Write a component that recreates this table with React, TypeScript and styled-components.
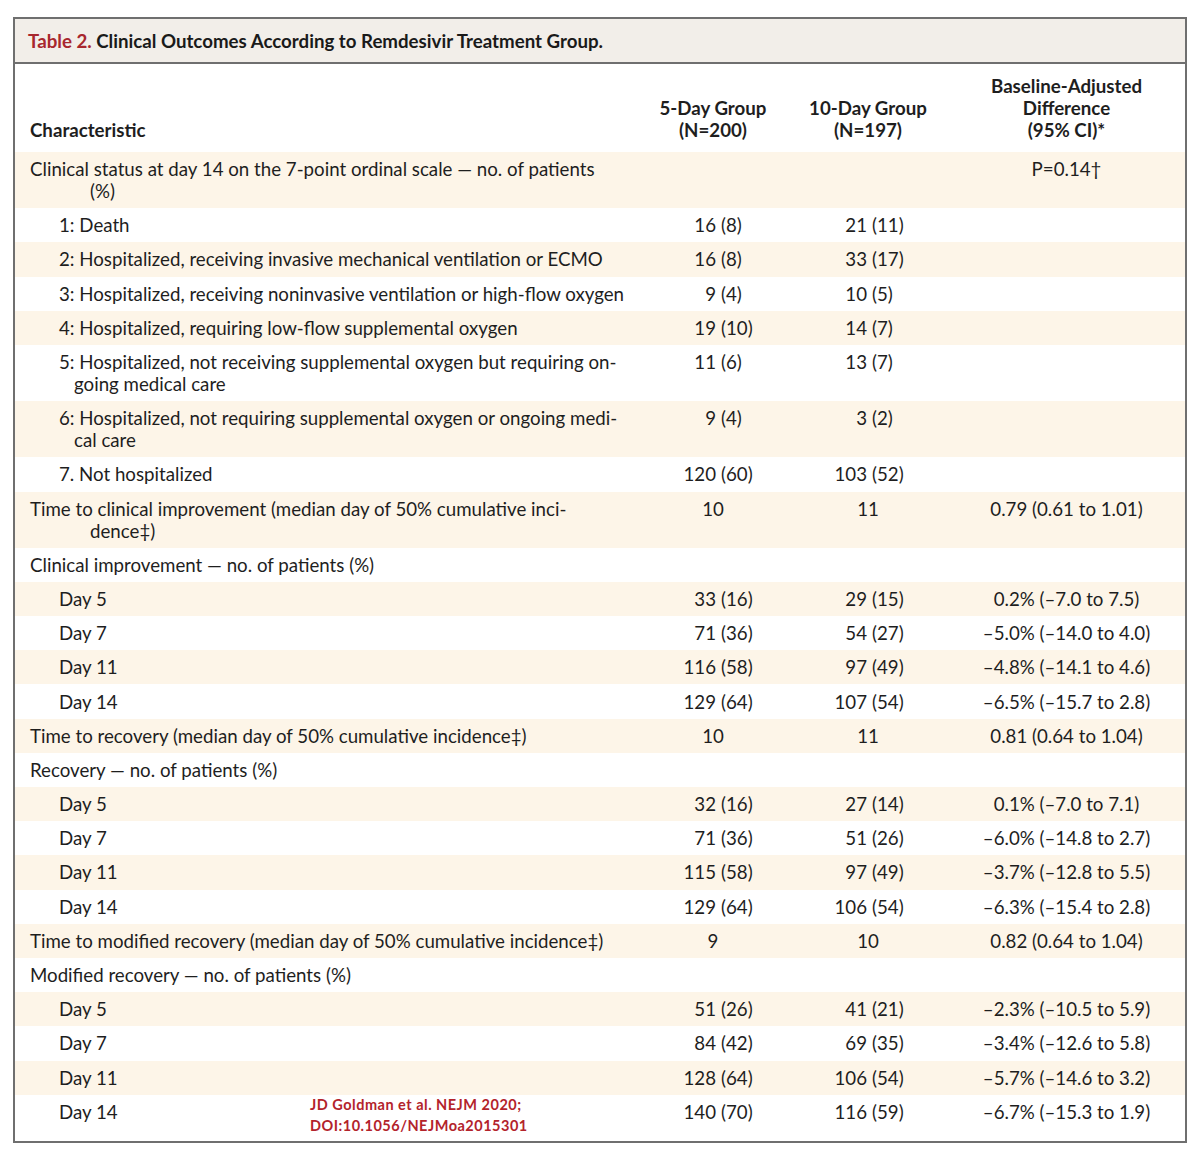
import styled, { createGlobalStyle } from "styled-components";

type Row = {
  label: string[];
  level: 0 | 1;
  a?: string;
  b?: string;
  c?: string;
};

const rows: Row[] = [
  {
    label: ["Clinical status at day 14 on the 7-point ordinal scale — no. of patients", "(%)"],
    level: 0,
    c: "P=0.14†",
  },
  { label: ["1: Death"], level: 1, a: "16 (8)", b: "21 (11)" },
  { label: ["2: Hospitalized, receiving invasive mechanical ventilation or ECMO"], level: 1, a: "16 (8)", b: "33 (17)" },
  { label: ["3: Hospitalized, receiving noninvasive ventilation or high-flow oxygen"], level: 1, a: "9 (4)", b: "10 (5)" },
  { label: ["4: Hospitalized, requiring low-flow supplemental oxygen"], level: 1, a: "19 (10)", b: "14 (7)" },
  {
    label: ["5: Hospitalized, not receiving supplemental oxygen but requiring on-", "going medical care"],
    level: 1,
    a: "11 (6)",
    b: "13 (7)",
  },
  {
    label: ["6: Hospitalized, not requiring supplemental oxygen or ongoing medi-", "cal care"],
    level: 1,
    a: "9 (4)",
    b: "3 (2)",
  },
  { label: ["7. Not hospitalized"], level: 1, a: "120 (60)", b: "103 (52)" },
  {
    label: ["Time to clinical improvement (median day of 50% cumulative inci-", "dence‡)"],
    level: 0,
    a: "10",
    b: "11",
    c: "0.79 (0.61 to 1.01)",
  },
  { label: ["Clinical improvement — no. of patients (%)"], level: 0 },
  { label: ["Day 5"], level: 1, a: "33 (16)", b: "29 (15)", c: "0.2% (–7.0 to 7.5)" },
  { label: ["Day 7"], level: 1, a: "71 (36)", b: "54 (27)", c: "–5.0% (–14.0 to 4.0)" },
  { label: ["Day 11"], level: 1, a: "116 (58)", b: "97 (49)", c: "–4.8% (–14.1 to 4.6)" },
  { label: ["Day 14"], level: 1, a: "129 (64)", b: "107 (54)", c: "–6.5% (–15.7 to 2.8)" },
  {
    label: ["Time to recovery (median day of 50% cumulative incidence‡)"],
    level: 0,
    a: "10",
    b: "11",
    c: "0.81 (0.64 to 1.04)",
  },
  { label: ["Recovery — no. of patients (%)"], level: 0 },
  { label: ["Day 5"], level: 1, a: "32 (16)", b: "27 (14)", c: "0.1% (–7.0 to 7.1)" },
  { label: ["Day 7"], level: 1, a: "71 (36)", b: "51 (26)", c: "–6.0% (–14.8 to 2.7)" },
  { label: ["Day 11"], level: 1, a: "115 (58)", b: "97 (49)", c: "–3.7% (–12.8 to 5.5)" },
  { label: ["Day 14"], level: 1, a: "129 (64)", b: "106 (54)", c: "–6.3% (–15.4 to 2.8)" },
  {
    label: ["Time to modified recovery (median day of 50% cumulative incidence‡)"],
    level: 0,
    a: "9",
    b: "10",
    c: "0.82 (0.64 to 1.04)",
  },
  { label: ["Modified recovery — no. of patients (%)"], level: 0 },
  { label: ["Day 5"], level: 1, a: "51 (26)", b: "41 (21)", c: "–2.3% (–10.5 to 5.9)" },
  { label: ["Day 7"], level: 1, a: "84 (42)", b: "69 (35)", c: "–3.4% (–12.6 to 5.8)" },
  { label: ["Day 11"], level: 1, a: "128 (64)", b: "106 (54)", c: "–5.7% (–14.6 to 3.2)" },
  { label: ["Day 14"], level: 1, a: "140 (70)", b: "116 (59)", c: "–6.7% (–15.3 to 1.9)" },
];

const GlobalStyle = createGlobalStyle`
  body {
    margin: 0;
    background: #ffffff;
    font-family: Lato, "Liberation Sans", sans-serif;
    color: #1e1e1e;
  }
`;

const Frame = styled.div`
  margin: 17px 0 0 13px;
  width: 1174px;
  box-sizing: border-box;
  border: 2px solid #6f6f6f;
  background: #fff;
  padding-bottom: 12px;
`;

const TitleBar = styled.div`
  background: #f2eee9;
  border-bottom: 2px solid #6f6f6f;
  height: 43px;
  display: flex;
  align-items: center;
  padding-left: 13px;
  font-size: 18.7px;
  font-weight: 700;
  color: #1a1a1a;

  span {
    color: #a8272e;
  }
`;

const grid = `
  display: grid;
  grid-template-columns: 623px 150px 160px 1fr;
  font-size: 18.7px;
  line-height: 22px;
`;

const HeadRow = styled.div`
  ${grid}
  padding: 11px 0 11px;
  font-weight: 700;
`;

const HeadCell = styled.div<{ $left?: boolean }>`
  align-self: end;
  text-align: ${(p) => (p.$left ? "left" : "center")};
  padding-left: ${(p) => (p.$left ? "15px" : "0")};
`;

const BodyRow = styled.div<{ $shaded: boolean }>`
  ${grid}
  position: relative;
  padding: 6.1px 0;
  background: ${(p) => (p.$shaded ? "#fdf5e8" : "#ffffff")};
`;

const Label = styled.div<{ $level: 0 | 1 }>`
  padding-left: ${(p) => (p.$level ? "59px" : "75px")};
  text-indent: ${(p) => (p.$level ? "-15px" : "-60px")};
`;

const Split = styled.div<{ $at: number }>`
  display: grid;
  grid-template-columns: ${(p) => p.$at}px 1fr;
  white-space: nowrap;

  & > span:first-child {
    text-align: right;
    padding-right: 5px;
  }
`;

const Centered = styled.div`
  text-align: center;
  white-space: nowrap;
`;

const Citation = styled.div`
  position: absolute;
  left: 295px;
  top: -1px;
  font-size: 14.5px;
  line-height: 21px;
  font-weight: 700;
  letter-spacing: 0.5px;
  color: #b3232b;
`;

function Value({ text, at }: { text?: string; at: number }) {
  if (!text) return <div />;
  const i = text.indexOf(" (");
  if (i < 0) return <Centered>{text}</Centered>;
  return (
    <Split $at={at}>
      <span>{text.slice(0, i)}</span>
      <span>{text.slice(i + 1)}</span>
    </Split>
  );
}

export default function App() {
  return (
    <>
      <GlobalStyle />
      <Frame>
        <TitleBar>
          <span>Table 2.</span>&nbsp;Clinical Outcomes According to Remdesivir Treatment Group.
        </TitleBar>
        <HeadRow>
          <HeadCell $left>Characteristic</HeadCell>
          <HeadCell>
            5-Day Group
            <br />
            (N=200)
          </HeadCell>
          <HeadCell>
            10-Day Group
            <br />
            (N=197)
          </HeadCell>
          <HeadCell>
            Baseline-Adjusted
            <br />
            Difference
            <br />
            (95% CI)*
          </HeadCell>
        </HeadRow>
        {rows.map((r, idx) => (
          <BodyRow key={idx} $shaded={idx % 2 === 0}>
            <Label $level={r.level}>
              {r.label.map((l, j) => (
                <span key={j}>
                  {j > 0 && <br />}
                  {l}
                </span>
              ))}
            </Label>
            <Value text={r.a} at={83} />
            <Value text={r.b} at={84} />
            {r.c ? <Centered>{r.c}</Centered> : <div />}
            {idx === rows.length - 1 && (
              <Citation>
                JD Goldman et al. NEJM 2020;
                <br />
                DOI:10.1056/NEJMoa2015301
              </Citation>
            )}
          </BodyRow>
        ))}
      </Frame>
    </>
  );
}
